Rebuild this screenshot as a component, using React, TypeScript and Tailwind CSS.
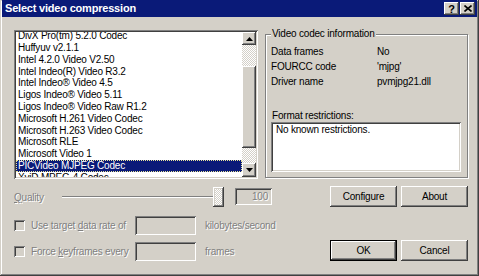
const raised =
  'shadow-[inset_-1px_-1px_#404040,inset_1px_1px_#fff,inset_-2px_-2px_#808080,inset_2px_2px_#d4d0c8]';
const sunken =
  'shadow-[inset_1px_1px_#808080,inset_-1px_-1px_#fff,inset_2px_2px_#404040,inset_-2px_-2px_#d4d0c8]';
const checker =
  '[background:repeating-conic-gradient(#d4d0c8_0_25%,#fff_0_50%)_0_0/2px_2px]';
const disabledText = 'text-[#808080] [text-shadow:1px_1px_0_#fff]';

const codecs = [
  'DivX Pro(tm) 5.2.0 Codec',
  'Huffyuv v2.1.1',
  'Intel 4.2.0 Video V2.50',
  'Intel Indeo(R) Video R3.2',
  'Intel Indeo® Video 4.5',
  'Ligos Indeo® Video 5.11',
  'Ligos Indeo® Video Raw R1.2',
  'Microsoft H.261 Video Codec',
  'Microsoft H.263 Video Codec',
  'Microsoft RLE',
  'Microsoft Video 1',
  'PICVideo MJPEG Codec',
  'XviD MPEG-4 Codec',
];

const info = [
  { label: 'Data frames', value: 'No' },
  { label: 'FOURCC code', value: "'mjpg'" },
  { label: 'Driver name', value: 'pvmjpg21.dll' },
];

const Arrow = ({ down }: { down?: boolean }) => (
  <svg width="7" height="4" viewBox="0 0 7 4">
    <polygon points={down ? '0,0 7,0 3.5,4' : '3.5,0 7,4 0,4'} fill="#000" />
  </svg>
);

const Button = ({ label, isDefault }: { label: string; isDefault?: boolean }) => (
  <div
    className={`w-[67px] h-[21px] flex items-center justify-center bg-[#d4d0c8] ${raised} ${
      isDefault ? 'border border-black' : ''
    }`}
  >
    {label}
  </div>
);

const CheckRow = ({
  before,
  accel,
  after,
  unit,
  className,
}: {
  before: string;
  accel: string;
  after: string;
  unit: string;
  className?: string;
}) => (
  <div className={`flex items-center h-[19px] ${className ?? ''}`}>
    <div className={`w-[11px] h-[11px] bg-[#d4d0c8] ${sunken}`} />
    <span className={`ml-[6px] w-[104px] whitespace-nowrap ${disabledText}`}>
      {before}
      <u>{accel}</u>
      {after}
    </span>
    <div className={`w-[61px] h-[19px] bg-[#d4d0c8] ${sunken}`} />
    <span className={`ml-[9px] whitespace-nowrap ${disabledText}`}>{unit}</span>
  </div>
);

export default function App() {
  return (
    <div className="w-[479px] h-[276px] overflow-hidden bg-[#d4d0c8] font-['Liberation_Sans',Arial,sans-serif] text-[10px] leading-[10px] tracking-[-0.2px] text-black shadow-[inset_-1px_-1px_#404040,inset_1px_1px_#d4d0c8,inset_-2px_-2px_#808080,inset_2px_2px_#fff]">
      {/* Title bar */}
      <div className="mx-[2px] h-[17px] bg-[#0a1a78] flex items-center pl-[3px] pr-[2px]">
        <span className="text-white font-bold text-[11px] leading-[11px]">Select video compression</span>
        <div className="ml-auto flex gap-[1px]">
          <div className={`w-[15px] h-[13px] bg-[#d4d0c8] flex items-center justify-center font-bold text-[11px] tracking-normal ${raised}`}>
            ?
          </div>
          <div className={`w-[15px] h-[13px] bg-[#d4d0c8] flex items-center justify-center ${raised}`}>
            <svg width="8" height="7" viewBox="0 0 8 7">
              <path d="M0.5 0.5L7.5 6.5M7.5 0.5L0.5 6.5" stroke="#000" strokeWidth="1.6" />
            </svg>
          </div>
        </div>
      </div>

      <div className="pl-[14px]">
        {/* List + codec info */}
        <div className="mt-[12px] flex items-start">
          <div className={`mt-[1px] w-[244px] h-[149px] bg-white p-[2px] ${sunken}`}>
            <div className="flex h-full overflow-hidden">
              <div className="flex-1 overflow-hidden">
                <div className="-mt-[1.8px]">
                  {codecs.map(name => {
                    const selected = name === 'PICVideo MJPEG Codec';
                    return (
                      <div
                        key={name}
                        className={`h-[11.8px] leading-[11.8px] pl-[2px] whitespace-nowrap ${
                          selected
                            ? 'bg-[#0a1a78] text-white outline-1 outline-dotted outline-[#e8e49a] -outline-offset-1'
                            : ''
                        }`}
                      >
                        {name}
                      </div>
                    );
                  })}
                </div>
              </div>
              {/* Scrollbar */}
              <div className="w-[14px] flex flex-col">
                <div className={`h-[13px] bg-[#d4d0c8] flex items-center justify-center ${raised}`}>
                  <Arrow />
                </div>
                <div className={`h-[21px] ${checker}`} />
                <div className={`h-[82px] bg-[#d4d0c8] ${raised}`} />
                <div className={`h-[15px] ${checker}`} />
                <div className={`h-[14px] bg-[#d4d0c8] flex items-center justify-center ${raised}`}>
                  <Arrow down />
                </div>
              </div>
            </div>
          </div>

          <fieldset className="ml-[7px] w-[203px] h-[149px] border border-[#808080] px-[5px] shadow-[1px_1px_0_#fff,inset_1px_1px_0_#fff]">
            <legend className="px-[1px] leading-[10px] bg-[#d4d0c8]">Video codec information</legend>
            <div className="mt-[6px]">
              {info.map(row => (
                <div key={row.label} className="flex items-center h-[14.7px]">
                  <span className="w-[106px]">{row.label}</span>
                  <span>{row.value}</span>
                </div>
              ))}
            </div>
            <div className="mt-[22px] pl-[1px]">Format restrictions:</div>
            <div className={`mt-[1px] w-[190px] h-[50px] bg-white pl-[5px] pt-[3px] ${sunken}`}>
              No known restrictions.
            </div>
          </fieldset>
        </div>

        {/* Quality row */}
        <div className="mt-[7px] h-[21px] flex items-start">
          <span className={`mt-[7px] w-[48px] ${disabledText}`}>
            <u>Q</u>uality
          </span>
          <div className="w-[162px] h-[21px] flex items-center">
            <div className="flex-1 h-[2px] border-t border-[#808080] border-b border-b-white" />
            <div className={`w-[11px] h-[20px] ${checker} ${raised}`} />
          </div>
          <div className={`ml-[11px] mt-[2px] w-[37px] h-[17px] bg-[#d4d0c8] flex items-center justify-end pr-[4px] ${sunken} ${disabledText}`}>
            100
          </div>
          <div className="ml-[58px] flex gap-[4px]">
            <Button label="Configure" />
            <Button label="About" />
          </div>
        </div>

        {/* Data rate / keyframes + OK/Cancel */}
        <div className="mt-[9px] flex items-start">
          <div className="w-[316px] flex flex-col">
            <CheckRow before="Use target " accel="d" after="ata rate of" unit="kilobytes/second" />
            <CheckRow before="Force " accel="k" after="eyframes every" unit="frames" className="mt-[7px]" />
          </div>
          <div className="mt-[24px] flex gap-[4px]">
            <Button label="OK" isDefault />
            <Button label="Cancel" />
          </div>
        </div>
      </div>
    </div>
  );
}
